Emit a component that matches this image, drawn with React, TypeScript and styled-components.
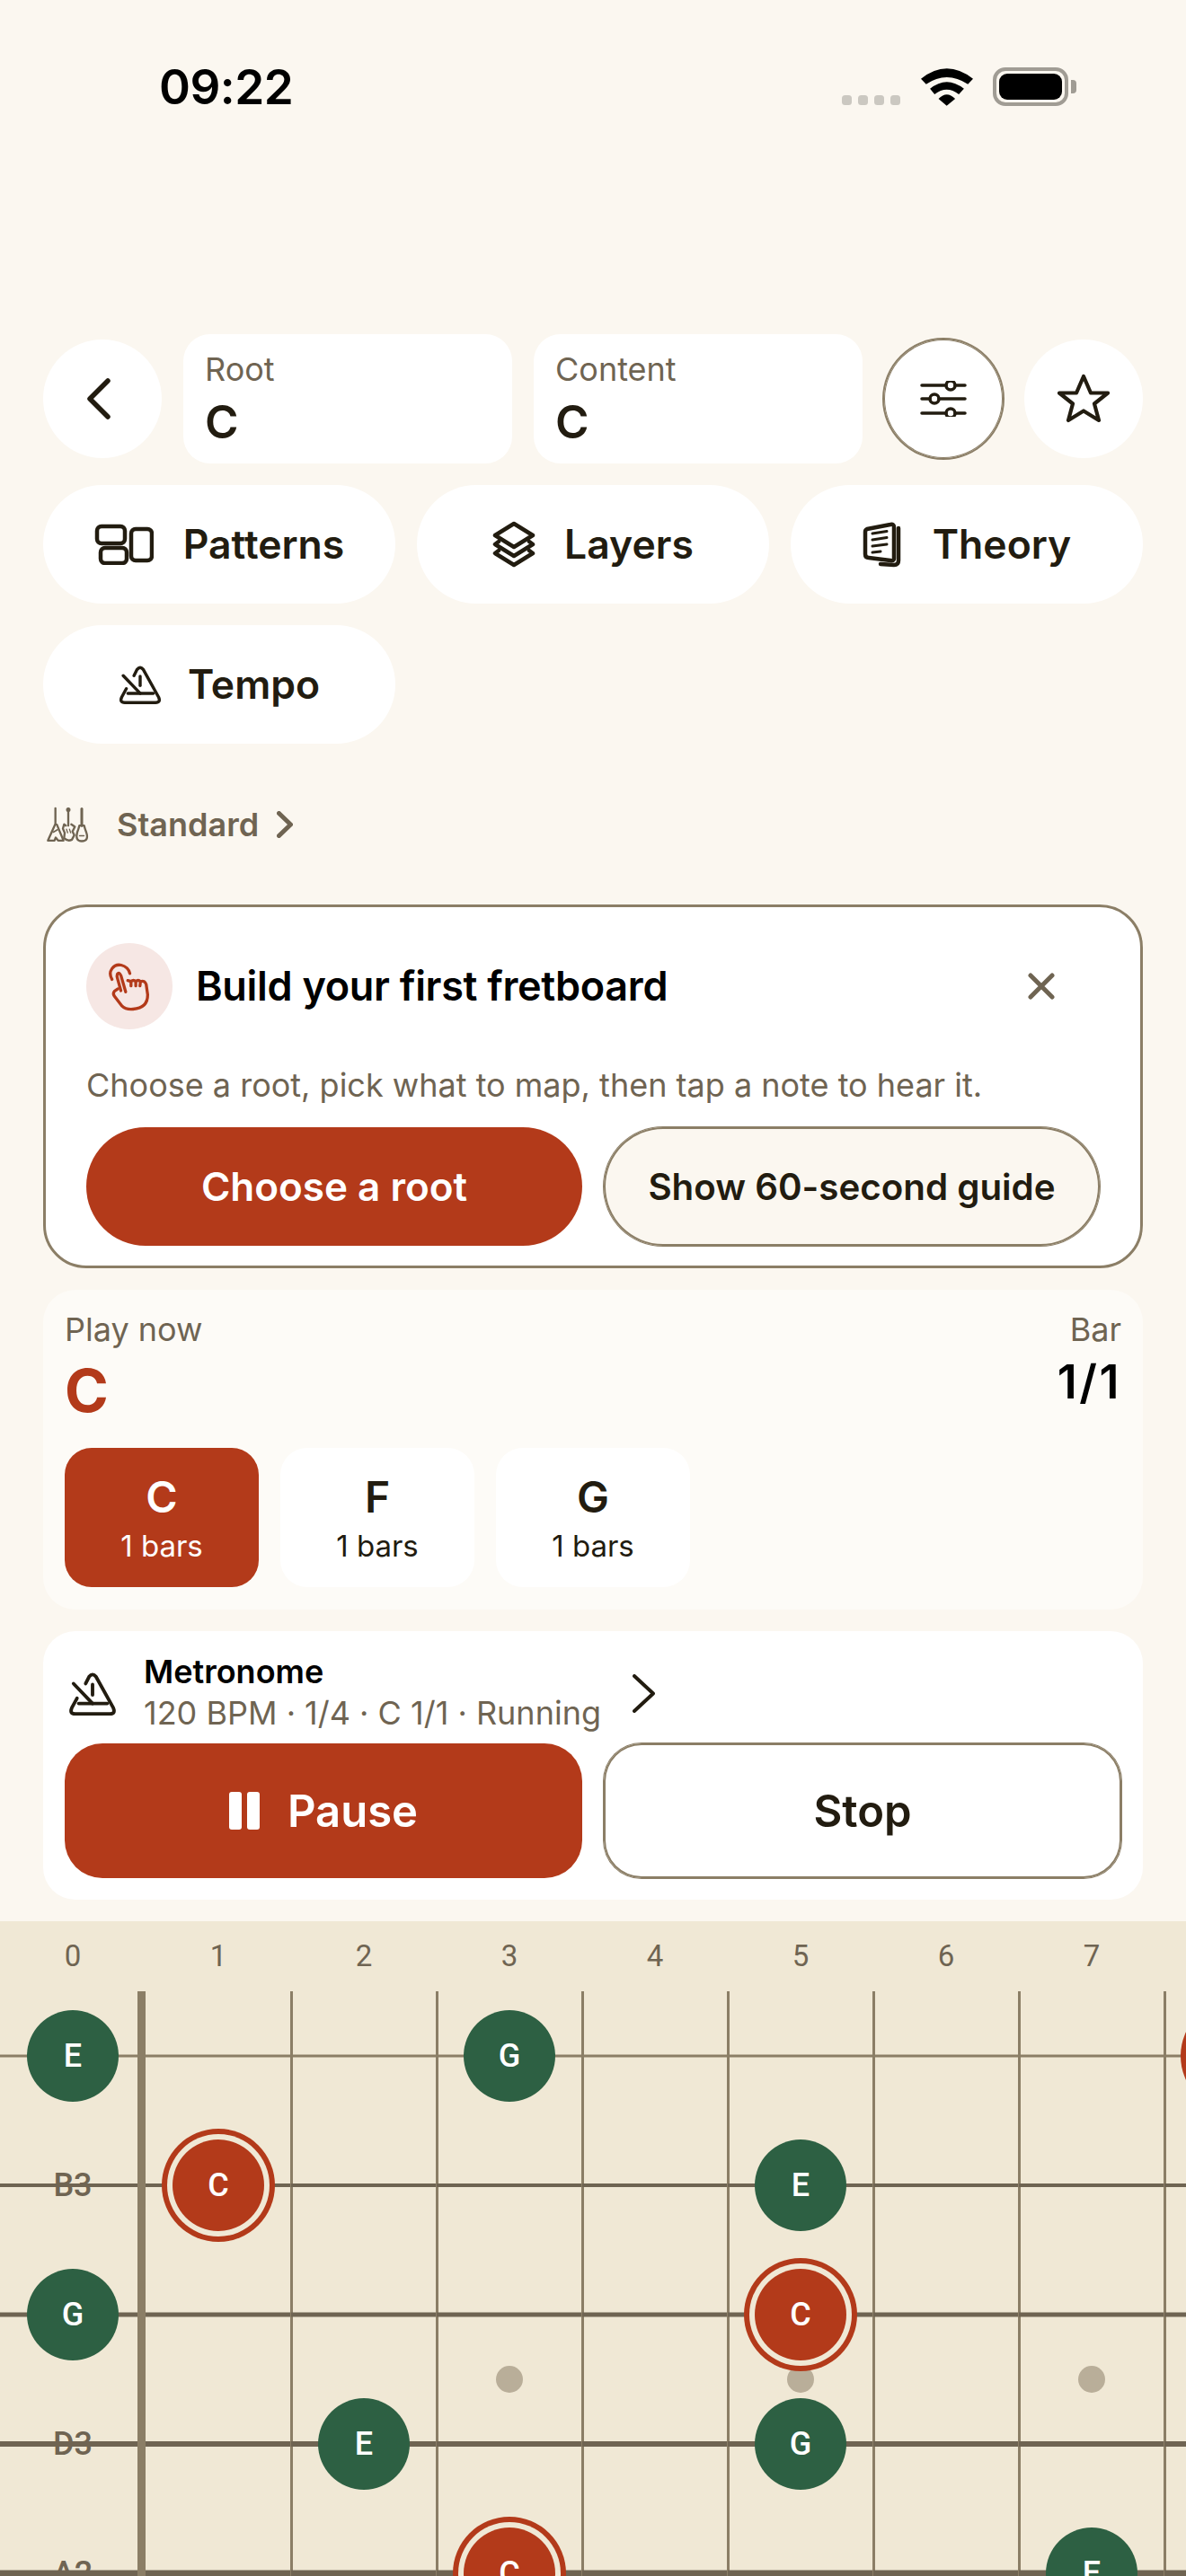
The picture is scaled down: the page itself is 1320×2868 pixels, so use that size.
import React from "react";
import styled, { createGlobalStyle } from "styled-components";

const INK = "#221c10";
const MUTED = "#6f6452";
const LINE = "#8b7e66";
const RED = "#b33a1a";
const GREEN = "#2d6043";
const PAPER = "#fbf7f0";
const WOOD = "#f0e8d5";

const Global = createGlobalStyle`
  html, body { margin: 0; padding: 0; background: ${PAPER}; }
  * { box-sizing: border-box; }
`;

const Page = styled.div`
  width: 1320px;
  height: 2868px;
  overflow: hidden;
  background: ${PAPER};
  font-family: Inter, "Liberation Sans", sans-serif;
  color: ${INK};
  display: flex;
  flex-direction: column;
`;

const StatusBar = styled.header`
  height: 372px;
  flex: none;
  padding: 71px 131px 0 177px;
  display: flex;
  justify-content: space-between;
  align-items: flex-start;
`;
const Time = styled.div`
  font-size: 53px;
  line-height: 52px;
  font-weight: 600;
  color: #000;
  letter-spacing: -0.5px;
`;
const StatusIcons = styled.div`
  display: flex;
  align-items: flex-start;
  padding-top: 4px;
`;
const Signal = styled.div`
  display: flex;
  gap: 7px;
  margin-top: 31px;
  margin-right: 23px;
`;
const SignalDot = styled.span`
  width: 11px;
  height: 11px;
  border-radius: 3.5px;
  background: #cbc8c1;
`;
const Battery = styled.div`
  position: relative;
  width: 84px;
  height: 43px;
  margin-left: 22px;
  border: 4px solid #a09c94;
  border-radius: 14px;
  padding: 3px;
  &::after {
    content: "";
    position: absolute;
    right: -13px;
    top: 10px;
    width: 6px;
    height: 15px;
    background: #a09c94;
    border-radius: 0 4px 4px 0;
  }
`;
const BatteryFill = styled.div`
  height: 100%;
  background: #000;
  border-radius: 9px;
`;

const Main = styled.main`
  padding: 0 48px;
  display: flex;
  flex-direction: column;
`;

const TopRow = styled.div`
  display: flex;
  align-items: center;
  gap: 24px;
  height: 144px;
`;
const RoundButton = styled.button<{ $outlined?: boolean }>`
  flex: none;
  width: 132px;
  height: 132px;
  padding: 0;
  border: none;
  border-radius: 50%;
  background: #fff;
  color: ${INK};
  display: flex;
  align-items: center;
  justify-content: center;
  box-shadow: ${(p) => (p.$outlined ? `0 0 0 2px ${LINE}, inset 0 0 0 1px ${LINE}` : "none")};
`;
const BackGlyph = styled.span`
  display: flex;
  margin-right: 8px;
`;
const Picker = styled.div`
  flex: none;
  width: 366px;
  height: 144px;
  border-radius: 30px;
  background: #fff;
  padding: 17px 24px 0;
`;
const PickerLabel = styled.div`
  font-size: 36px;
  line-height: 44px;
  color: ${MUTED};
`;
const PickerValue = styled.div`
  font-size: 51px;
  line-height: 56px;
  font-weight: 600;
  margin-top: 9px;
`;

const PillGrid = styled.div`
  margin-top: 24px;
  display: grid;
  grid-template-columns: repeat(3, 392px);
  grid-auto-rows: 132px;
  gap: 24px;
`;
const Pill = styled.button<{ $gap: number }>`
  border: none;
  border-radius: 66px;
  background: #fff;
  color: ${INK};
  font-family: inherit;
  font-size: 44.500px;
  font-weight: 600;
  display: flex;
  align-items: center;
  justify-content: center;
  gap: ${(p) => p.$gap}px;
  padding: 0;
`;

const TuningRow = styled.div`
  height: 46px;
  margin-top: 67px;
  display: flex;
  align-items: center;
  color: ${MUTED};
  font-size: 36px;
  font-weight: 600;
  padding-left: 2px;
`;
const TuningLabel = styled.span`
  margin: 0 20px 0 30px;
`;

const GuideCard = styled.section`
  margin-top: 66px;
  height: 405px;
  border: 3px solid ${LINE};
  border-radius: 48px;
  background: #fff;
  padding: 40px 45px 0;
  display: flex;
  flex-direction: column;
`;
const GuideHead = styled.div`
  display: flex;
  align-items: center;
  height: 96px;
`;
const GuideBadge = styled.div`
  width: 96px;
  height: 96px;
  border-radius: 50%;
  background: #f6e7e4;
  display: flex;
  align-items: center;
  justify-content: center;
  flex: none;
`;
const GuideTitle = styled.h2`
  margin: 0 0 0 26px;
  flex: 1;
  font-size: 45px;
  font-weight: 600;
  letter-spacing: -0.3px;
  color: #000;
  line-height: 56px;
`;
const GuideClose = styled.div`
  margin-right: 50px;
  display: flex;
`;
const GuideText = styled.p`
  margin: 40px 0 0;
  font-size: 36px;
  line-height: 44px;
  color: ${MUTED};
`;
const ActionRow = styled.div`
  display: grid;
  grid-template-columns: 1fr 1fr;
  gap: 24px;
`;
const GuideActions = styled(ActionRow)`
  margin-top: 25px;
`;
const GuideButton = styled.button<{ $primary?: boolean }>`
  height: 132px;
  border-radius: 66px;
  border: none;
  font-family: inherit;
  font-weight: 600;
  font-size: ${(p) => (p.$primary ? 44 : 40.3)}px;
  background: ${(p) => (p.$primary ? RED : PAPER)};
  color: ${(p) => (p.$primary ? "#fff" : INK)};
  box-shadow: ${(p) => (p.$primary ? "none" : `inset 0 0 0 2px ${LINE}, 0 0 0 1px ${LINE}`)};
  padding: 0;
`;

const PlayCard = styled.section`
  margin-top: 24px;
  height: 356px;
  border-radius: 36px;
  background: #fdfbf7;
  padding: 21px 24px 0;
`;
const PlayHead = styled.div`
  display: flex;
  justify-content: space-between;
  height: 155px;
`;
const PlayCol = styled.div<{ $right?: boolean }>`
  display: flex;
  flex-direction: column;
  align-items: ${(p) => (p.$right ? "flex-end" : "flex-start")};
`;
const SmallLabel = styled.div`
  font-size: 36px;
  line-height: 46px;
  color: ${MUTED};
`;
const NowChord = styled.div`
  font-size: 66px;
  line-height: 80px;
  font-weight: 700;
  color: ${RED};
  margin-top: 5px;
`;
const BarCount = styled.div`
  font-size: 52px;
  line-height: 66px;
  font-weight: 600;
  letter-spacing: 2.5px;
  color: #000;
  margin-top: 3px;
`;
const ChipRow = styled.div`
  display: flex;
  gap: 24px;
`;
const Chip = styled.div<{ $active?: boolean }>`
  width: 216px;
  height: 155px;
  border-radius: 30px;
  background: ${(p) => (p.$active ? RED : "#fff")};
  color: ${(p) => (p.$active ? "#fff" : INK)};
  display: flex;
  flex-direction: column;
  align-items: center;
  padding-top: 27px;
`;
const ChipName = styled.div`
  font-size: 48px;
  line-height: 56px;
  font-weight: 600;
`;
const ChipBars = styled.div`
  font-size: 33px;
  line-height: 40px;
  margin-top: 6px;
`;

const MetroCard = styled.section`
  margin-top: 24px;
  height: 299px;
  border-radius: 36px;
  background: #fff;
  padding: 24px;
`;
const MetroHead = styled.div`
  display: flex;
  align-items: center;
  height: 91px;
  margin-bottom: 10px;
  padding-left: 4px;
`;
const MetroText = styled.div`
  margin: 0 35px 4px 30px;
`;
const MetroTitle = styled.div`
  font-size: 36px;
  line-height: 46px;
  font-weight: 600;
  color: #000;
`;
const MetroSub = styled.div`
  font-size: 36px;
  line-height: 46px;
  color: ${MUTED};
`;
const PlayButton = styled.button<{ $primary?: boolean }>`
  height: 150px;
  border-radius: 42px;
  border: none;
  padding: 0;
  font-family: inherit;
  font-size: 49px;
  font-weight: 600;
  background: ${(p) => (p.$primary ? RED : "#fff")};
  color: ${(p) => (p.$primary ? "#fff" : INK)};
  box-shadow: ${(p) => (p.$primary ? "none" : `inset 0 0 0 2px ${LINE}, 0 0 0 1px ${LINE}`)};
  display: flex;
  align-items: center;
  justify-content: center;
  gap: 31px;
`;
const PauseBars = styled.span`
  display: flex;
  gap: 6px;
`;
const PauseBar = styled.span`
  width: 14px;
  height: 42px;
  background: #fff;
  border-radius: 3px;
`;

const Fretboard = styled.section`
  margin-top: 24px;
  flex: 1;
  background: ${WOOD};
  overflow: hidden;
  font-family: Roboto, "Liberation Sans", sans-serif;
  min-height: 0;
`;
const FretNumbers = styled.div`
  display: grid;
  grid-template-columns: repeat(9, 162px);
  height: 78px;
  align-items: center;
`;
const FretNumber = styled.div`
  text-align: center;
  font-size: 33px;
  color: ${MUTED};
  padding-bottom: 1px;
`;
const FretGrid = styled.div`
  display: grid;
  grid-template-columns: repeat(9, 162px);
  grid-auto-rows: 144px;
`;
const Cell = styled.div<{ $string: number; $col: number }>`
  position: relative;
  display: flex;
  align-items: center;
  justify-content: center;
  &::before {
    content: "";
    position: absolute;
    left: 0;
    right: 0;
    top: 50%;
    height: ${(p) => p.$string}px;
    transform: translateY(-50%);
    background: ${(p) => (p.$string === 3 ? LINE : MUTED)};
  }
  &::after {
    content: "";
    position: absolute;
    top: 0;
    bottom: 0;
    right: ${(p) => (p.$col === 0 ? "0" : "-2px")};
    width: ${(p) => (p.$col === 0 ? "9px" : "3px")};
    background: ${LINE};
  }
`;
const Note = styled.div<{ $root?: boolean }>`
  position: relative;
  z-index: 3;
  width: 102px;
  height: 102px;
  border-radius: 50%;
  background: ${(p) => (p.$root ? RED : GREEN)};
  color: #fff;
  font-size: 36px;
  font-weight: 500;
  display: flex;
  align-items: center;
  justify-content: center;
  box-shadow: ${(p) => (p.$root ? `0 0 0 6px ${WOOD}, 0 0 0 12px ${RED}` : "none")};
`;
const OpenLabel = styled.div`
  position: relative;
  z-index: 1;
  font-size: 36px;
  font-weight: 500;
  color: ${MUTED};
`;
const Inlay = styled.span`
  position: absolute;
  z-index: 1;
  left: 50%;
  bottom: -15px;
  width: 30px;
  height: 30px;
  margin-left: -15px;
  border-radius: 50%;
  background: #b9ae99;
`;

const Ic = styled.svg`
  display: block;
  flex: none;
  fill: none;
  stroke: currentColor;
  stroke-linecap: round;
  stroke-linejoin: round;
`;

const Wifi = () => (
  <svg width="58" height="43" viewBox="375 75 172 126" style={{ display: "block" }} fill="#000">
    <path d="M375 112 Q460 44 547 112 L530 130 Q460 84 392 130 Z" />
    <path d="M405 145 Q460 100 517 145 L500 163 Q460 132 420 163 Z" />
    <path d="M433 178 Q460 150 488 178 L460 201 Z" />
  </svg>
);

const Back = () => (
  <Ic width="26" height="46" viewBox="0 0 26 46" strokeWidth="5.500">
    <path d="M23 3 L3 23 L23 43" />
  </Ic>
);
const Sliders = () => (
  <Ic width="52" height="40" viewBox="0 0 52 40" strokeWidth="3.5">
    <path d="M2 5H29M39 5H50M2 20H11M21 20H50M2 36H29M39 36H50" />
    <circle cx="34" cy="5" r="5" />
    <circle cx="16" cy="20" r="5" />
    <circle cx="34" cy="36" r="5" />
  </Ic>
);
const StarIcon = () => (
  <Ic width="58" height="56" viewBox="0 0 58 56" strokeWidth="4.2">
    <path d="M29 3 L37 21.500 H56 L41 33.500 L46 52 L29 41.500 L12 52 L17 33.500 L2 21.500 H21 Z" />
  </Ic>
);
const PatternsIcon = () => (
  <Ic width="66" height="46" viewBox="0 0 66 46" strokeWidth="4.5">
    <rect x="3" y="3" width="31" height="19" rx="5" />
    <rect x="7" y="27" width="29" height="17" rx="5" />
    <rect x="41" y="6" width="23" height="35" rx="5" />
  </Ic>
);
const LayersIcon = () => (
  <Ic width="48" height="52" viewBox="0 0 48 52" strokeWidth="4.5">
    <path d="M24 3 L45 16 L24 29 L3 16 Z" />
    <path d="M7 23 L3 26 L24 39 L45 26 L41 23" />
    <path d="M7 33 L3 36 L24 49 L45 36 L41 33" />
  </Ic>
);
const TheoryIcon = () => (
  <Ic width="44" height="52" viewBox="0 0 44 52" strokeWidth="4.5">
    <path d="M5 9 L31 4 Q35 3 35 7 V42 Q35 45 31 44 L7 41 Q3 41 3 37 V12 Q3 10 5 9 Z" />
    <path d="M40 8 V44 Q40 49 35 49 L20 48" />
    <path d="M11 14 L27 11.500M11 21 L27 18.500M11 28 L27 26M11 35 L20 34" strokeWidth="3" />
  </Ic>
);
const Metronome = ({ w, h }: { w: number; h: number }) => (
  <Ic width={w} height={h} viewBox="15 28 56 52" strokeWidth="4">
    <path d="M35 42 L39 34 Q43 29 47 34 L67 70 Q70 77 63 77 H23 Q16 77 19 70 L25 59" />
    <path d="M27 65 H60" />
    <path d="M21 42 L43 65" />
    <path d="M43 43 V55" />
  </Ic>
);
const TuningIcon = () => (
  <Ic width="50" height="41" viewBox="60 55 150 122" strokeWidth="7">
    <path d="M95 60 V112 L70 168 L92 168 L96 158 L104 168 L122 168 L100 115" />
    <path d="M88 140 L102 132" strokeWidth="5" />
    <path d="M138 62 V118 M130 118 L124 114 L120 128 L126 142 L124 160 Q136 172 150 165 L158 150 L152 138 L160 122 L148 114" />
    <path d="M132 130 L136 142 M142 130 L146 142" strokeWidth="4" />
    <circle cx="138" cy="65" r="4" fill="currentColor" />
    <path d="M183 62 V118" strokeWidth="9" />
    <path d="M175 118 Q172 130 168 140 Q160 170 183 170 Q208 170 198 140 Q194 130 191 118 Z" />
    <path d="M176 152 H190" strokeWidth="5" />
  </Ic>
);
const HandIcon = () => (
  <Ic width="48" height="55" viewBox="90 90 145 165" strokeWidth="10" style={{ color: RED }}>
    <path d="M104 148 C88 120 110 95 135 100 C150 103 162 115 164 128" />
    <path d="M150 190 L134 135 Q128 122 122 130 Q120 136 122 143 L134 186" />
    <path d="M124 180 L112 188 Q106 196 112 204 L138 238 Q150 250 175 248 Q224 245 224 200 L219 165 Q214 150 200 155 L198 170 M200 155 Q192 148 184 155 L184 170 M184 155 Q176 148 168 155 L168 170 M168 155 L157 152" />
  </Ic>
);
const Cross = () => (
  <Ic width="30" height="30" viewBox="0 0 30 30" strokeWidth="5" style={{ color: MUTED }}>
    <path d="M3 3 L27 27 M27 3 L3 27" />
  </Ic>
);
const Chevron = ({ w, h, sw }: { w: number; h: number; sw: number }) => (
  <Ic width={w} height={h} viewBox={`0 0 ${w} ${h}`} strokeWidth={sw}>
    <path d={`M${sw / 2} ${sw / 2} L${w - sw / 2} ${h / 2} L${sw / 2} ${h - sw / 2}`} />
  </Ic>
);

const strings = [
  { label: "E3", t: 3, notes: { 0: ["E", false], 3: ["G", false], 8: ["C", true] } },
  { label: "B3", t: 4, notes: { 1: ["C", true], 5: ["E", false] } },
  { label: "G3", t: 5, notes: { 0: ["G", false], 5: ["C", true] } },
  { label: "D3", t: 6, notes: { 2: ["E", false], 5: ["G", false] } },
  { label: "A2", t: 7, notes: { 3: ["C", true], 7: ["E", false] } },
] as { label: string; t: number; notes: Record<number, [string, boolean]> }[];

const columns = [0, 1, 2, 3, 4, 5, 6, 7, 8];
const inlayFrets = [3, 5, 7];

export default function App() {
  return (
    <Page>
      <Global />
      <StatusBar>
        <Time>09:22</Time>
        <StatusIcons>
          <Signal>
            <SignalDot />
            <SignalDot />
            <SignalDot />
            <SignalDot />
          </Signal>
          <Wifi />
          <Battery>
            <BatteryFill />
          </Battery>
        </StatusIcons>
      </StatusBar>
      <Main>
        <TopRow>
          <RoundButton>
            <BackGlyph>
              <Back />
            </BackGlyph>
          </RoundButton>
          <Picker>
            <PickerLabel>Root</PickerLabel>
            <PickerValue>C</PickerValue>
          </Picker>
          <Picker>
            <PickerLabel>Content</PickerLabel>
            <PickerValue>C</PickerValue>
          </Picker>
          <RoundButton $outlined>
            <Sliders />
          </RoundButton>
          <RoundButton>
            <StarIcon />
          </RoundButton>
        </TopRow>
        <PillGrid>
          <Pill $gap={33}>
            <PatternsIcon />
            Patterns
          </Pill>
          <Pill $gap={32}>
            <LayersIcon />
            Layers
          </Pill>
          <Pill $gap={34}>
            <TheoryIcon />
            Theory
          </Pill>
          <Pill $gap={29}>
            <Metronome w={48} h={45} />
            Tempo
          </Pill>
        </PillGrid>
        <TuningRow>
          <TuningIcon />
          <TuningLabel>Standard</TuningLabel>
          <Chevron w={18} h={30} sw={5} />
        </TuningRow>
        <GuideCard>
          <GuideHead>
            <GuideBadge>
              <HandIcon />
            </GuideBadge>
            <GuideTitle>Build your first fretboard</GuideTitle>
            <GuideClose>
              <Cross />
            </GuideClose>
          </GuideHead>
          <GuideText>Choose a root, pick what to map, then tap a note to hear it.</GuideText>
          <GuideActions>
            <GuideButton $primary>Choose a root</GuideButton>
            <GuideButton>Show 60-second guide</GuideButton>
          </GuideActions>
        </GuideCard>
        <PlayCard>
          <PlayHead>
            <PlayCol>
              <SmallLabel>Play now</SmallLabel>
              <NowChord>C</NowChord>
            </PlayCol>
            <PlayCol $right>
              <SmallLabel>Bar</SmallLabel>
              <BarCount>1/1</BarCount>
            </PlayCol>
          </PlayHead>
          <ChipRow>
            <Chip $active>
              <ChipName>C</ChipName>
              <ChipBars>1 bars</ChipBars>
            </Chip>
            <Chip>
              <ChipName>F</ChipName>
              <ChipBars>1 bars</ChipBars>
            </Chip>
            <Chip>
              <ChipName>G</ChipName>
              <ChipBars>1 bars</ChipBars>
            </Chip>
          </ChipRow>
        </PlayCard>
        <MetroCard>
          <MetroHead>
            <Metronome w={54} h={50} />
            <MetroText>
              <MetroTitle>Metronome</MetroTitle>
              <MetroSub>120 BPM · 1/4 · C 1/1 · Running</MetroSub>
            </MetroText>
            <Chevron w={25} h={43} sw={4} />
          </MetroHead>
          <ActionRow>
            <PlayButton $primary>
              <PauseBars>
                <PauseBar />
                <PauseBar />
              </PauseBars>
              Pause
            </PlayButton>
            <PlayButton>Stop</PlayButton>
          </ActionRow>
        </MetroCard>
      </Main>
      <Fretboard>
        <FretNumbers>
          {columns.map((c) => (
            <FretNumber key={c}>{c}</FretNumber>
          ))}
        </FretNumbers>
        <FretGrid>
          {strings.map((s, si) =>
            columns.map((c) => {
              const n = s.notes[c];
              return (
                <Cell key={`${si}-${c}`} $string={s.t} $col={c}>
                  {si === 2 && inlayFrets.includes(c) && <Inlay />}
                  {n ? (
                    <Note $root={n[1]}>{n[0]}</Note>
                  ) : c === 0 ? (
                    <OpenLabel>{s.label}</OpenLabel>
                  ) : null}
                </Cell>
              );
            })
          )}
        </FretGrid>
      </Fretboard>
    </Page>
  );
}
